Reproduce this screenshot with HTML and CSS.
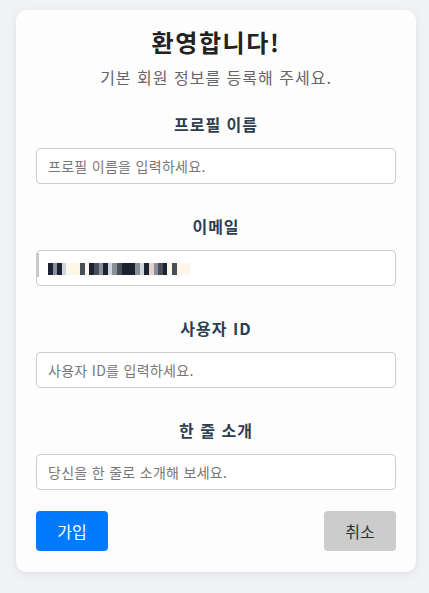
FILE: index.html
```html
<!DOCTYPE html>
<html lang="ko">
<head>
<meta charset="utf-8">
<title>회원 정보 등록</title>
<link rel="stylesheet" href="styles.css">
</head>
<body>
<form class="card">
  <h1 class="title">환영합니다!</h1>
  <p class="subtitle">기본 회원 정보를 등록해 주세요.</p>

  <div class="field">
    <label class="label" for="name">프로필 이름</label>
    <input class="input" id="name" type="text" placeholder="프로필 이름을 입력하세요.">
  </div>

  <div class="field">
    <label class="label">이메일</label>
    <div class="input input-email">
      <span class="caret"></span>
      <span class="mosaic">
        <span class="m d"></span><span class="m g"></span><span class="m d"></span><span class="m l"></span><span class="m c"></span><span class="m c"></span><span class="m c"></span><span class="m m2"></span><span class="m c"></span><span class="m d"></span><span class="m m2"></span><span class="m g"></span><span class="m d"></span><span class="m l"></span><span class="m g"></span><span class="m m2"></span><span class="m d"></span><span class="m d"></span><span class="m d"></span><span class="m g"></span><span class="m l"></span><span class="m d"></span><span class="m p"></span><span class="m g"></span><span class="m m2"></span><span class="m d"></span><span class="m c"></span><span class="m m2"></span><span class="m c"></span><span class="m c"></span><span class="m c"></span>
      </span>
    </div>
  </div>

  <div class="field">
    <label class="label" for="uid">사용자 ID</label>
    <input class="input" id="uid" type="text" placeholder="사용자 ID를 입력하세요.">
  </div>

  <div class="field">
    <label class="label" for="bio">한 줄 소개</label>
    <input class="input" id="bio" type="text" placeholder="당신을 한 줄로 소개해 보세요.">
  </div>

  <div class="actions">
    <button class="btn btn-primary" type="button">가입</button>
    <button class="btn btn-secondary" type="button">취소</button>
  </div>
</form>
</body>
</html>
```

FILE: styles.css
```css
* { box-sizing: border-box; }

html, body {
  margin: 0;
  background: #f0f2f5;
}

body {
  padding: 10px 13px 20px 16px;
  font-family: "Noto Sans CJK KR", "Noto Sans", "Liberation Sans", sans-serif;
  color: #333;
}

.card {
  width: 400px;
  background: #fdfdfe;
  border-radius: 10px;
  box-shadow: 0 2px 8px rgba(0, 0, 0, 0.08);
  padding: 16px 20px 21px;
  display: flex;
  flex-direction: column;
}

.title {
  margin: 0;
  text-align: center;
  font-size: 24px;
  line-height: 32px;
  font-weight: 700;
  letter-spacing: 1.6px;
  color: #222;
}

.subtitle {
  margin: 7px 0 0;
  text-align: center;
  font-size: 16px;
  line-height: 24px;
  letter-spacing: 1px;
  color: #666;
}

.field {
  display: flex;
  flex-direction: column;
  gap: 12px;
  margin-top: 30px;
}

.subtitle + .field { margin-top: 23px; }

.label {
  text-align: center;
  font-size: 16px;
  line-height: 24px;
  font-weight: 700;
  letter-spacing: 1px;
  color: #2c3e50;
}

.input {
  height: 36px;
  width: 100%;
  border: 1px solid #ccc;
  border-radius: 4px;
  padding: 0 11px;
  font-family: inherit;
  font-size: 14px;
  letter-spacing: 0.3px;
  color: #333;
  background: #fff;
  outline: none;
}

.input::placeholder { color: #777; }

.input-email {
  position: relative;
  display: flex;
  align-items: center;
}

.caret {
  position: absolute;
  left: 0;
  top: 2px;
  width: 2px;
  height: 24px;
  background: #c8c8c8;
}

.mosaic {
  display: flex;
  height: 12px;
  margin-top: 2px;
}

.m { width: 4.6px; height: 12px; }
.m.d { background: #1b2232; }
.m.g { background: #8a9099; }
.m.l { background: #cfd5dc; }
.m.c { background: #fdf7ea; }
.m.m2 { background: #4a4e58; }
.m.p { background: #e6d2cc; }

.actions {
  display: flex;
  justify-content: space-between;
  margin-top: 21px;
}

.btn {
  width: 72px;
  height: 40px;
  border: none;
  border-radius: 4px;
  font-family: inherit;
  font-size: 16px;
  line-height: 1;
  cursor: pointer;
}

.btn-primary {
  background: #007bff;
  color: #fff;
}

.btn-secondary {
  background: #ccc;
  color: #333;
}
```
